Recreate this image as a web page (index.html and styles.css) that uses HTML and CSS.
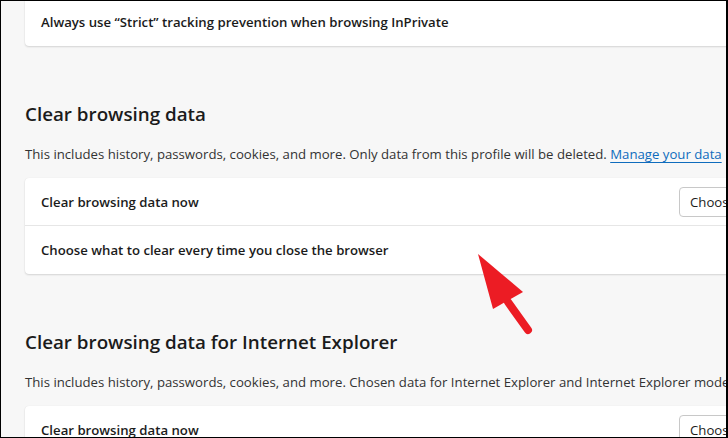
FILE: index.html
```html
<!DOCTYPE html>
<html lang="en">
<head>
<meta charset="utf-8">
<title>Privacy settings</title>
<link rel="stylesheet" href="styles.css">
</head>
<body>
<div class="frame">
  <main class="page">
    <section class="card card--cut">
      <div class="row">Always use “Strict” tracking prevention when browsing InPrivate</div>
    </section>

    <section class="group">
      <h2 class="group__title">Clear browsing data</h2>
      <p class="group__desc">This includes history, passwords, cookies, and more. Only data from this profile will be deleted. <a class="link" href="#">Manage your data</a></p>
      <div class="card">
        <div class="row row--divided">
          <span class="row__label">Clear browsing data now</span>
          <button class="btn" type="button">Choose what to clear</button>
        </div>
        <div class="row">
          <span class="row__label">Choose what to clear every time you close the browser</span>
        </div>
      </div>
    </section>

    <section class="group">
      <h2 class="group__title">Clear browsing data for Internet Explorer</h2>
      <p class="group__desc">This includes history, passwords, cookies, and more. Chosen data for Internet Explorer and Internet Explorer mode will be deleted.</p>
      <div class="card">
        <div class="row row--divided">
          <span class="row__label">Clear browsing data now</span>
          <button class="btn" type="button">Choose what to clear</button>
        </div>
      </div>
    </section>
  </main>

  <svg class="arrow" width="70" height="90" viewBox="0 0 70 90" aria-hidden="true">
    <line x1="30" y1="48" x2="50" y2="76" stroke="#ec1c24" stroke-width="8" stroke-linecap="round"/>
    <polygon points="0,0 45,38 15,55" fill="#ec1c24"/>
  </svg>
</div>
</body>
</html>
```

FILE: styles.css
```css
* { box-sizing: border-box; }

html, body {
  margin: 0;
  padding: 0;
  background: #000;
}

.frame {
  position: relative;
  width: 728px;
  height: 438px;
  overflow: hidden;
  background: #f7f7f7;
  border-style: solid;
  border-color: #000;
  border-width: 1px 2px 1px 1px;
  font-family: "Open Sans", "Noto Sans", sans-serif;
  color: #1b1b1b;
}

.page {
  width: 844px;
  padding-left: 24px;
  display: flex;
  flex-direction: column;
}

.card {
  background: #fff;
  border-radius: 4px;
  box-shadow: 0 1px 2px rgba(0, 0, 0, 0.14), 0 0 1px rgba(0, 0, 0, 0.08);
  display: flex;
  flex-direction: column;
}

.card--cut {
  margin-top: -3px;
}

.row {
  height: 48px;
  padding: 0 16px;
  display: flex;
  align-items: center;
  font-size: 13.2px;
  font-weight: 600;
  white-space: nowrap;
}

.row--divided {
  border-bottom: 1px solid #e6e6e6;
}

.row__label {
  flex: 1;
}

.btn {
  width: 150px;
  height: 30px;
  background: #fff;
  border: 1px solid #c8c8c8;
  border-radius: 4px;
  font-family: inherit;
  font-size: 13.2px;
  color: #1b1b1b;
  text-align: left;
  padding: 0 10px;
}

.group {
  display: flex;
  flex-direction: column;
}

.group__title {
  margin: 54px 0 0;
  font-size: 18.8px;
  line-height: 28px;
  font-weight: 600;
}

.group__desc {
  margin: 16px 0 14px;
  font-size: 13.2px;
  line-height: 20px;
  color: #333;
  white-space: nowrap;
}

.link {
  color: #0f6cbd;
  text-decoration: underline;
  text-underline-offset: 3px;
}

.arrow {
  position: absolute;
  left: 477px;
  top: 253px;
}
```
